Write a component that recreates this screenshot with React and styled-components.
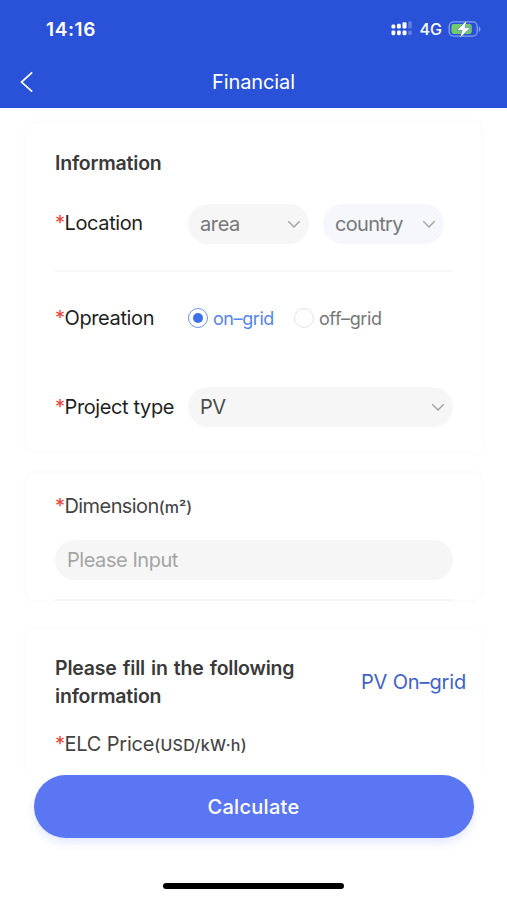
import styled, { createGlobalStyle } from "styled-components";

const GlobalStyle = createGlobalStyle`
  * {
    box-sizing: border-box;
  }
  body {
    margin: 0;
    background: #fff;
    font-family: Inter, "Liberation Sans", sans-serif;
  }
`;

const SignalIcon = () => (
  <svg width="22" height="16" viewBox="0 0 22 16" fill="#fff">
    <rect x="0.5" y="3.6" width="3.8" height="4" rx="1.4" />
    <rect x="6" y="2.8" width="3.8" height="4.8" rx="1.4" />
    <rect x="11.5" y="1.2" width="4" height="6.4" rx="1.4" />
    <rect x="0.5" y="9.4" width="3.8" height="4.8" rx="1.4" />
    <rect x="6" y="9.4" width="3.8" height="4.8" rx="1.4" />
    <rect x="11.5" y="9.4" width="4" height="4.8" rx="1.4" />
    <rect x="17.2" y="0.2" width="3.6" height="7.4" rx="1.4" opacity="0.25" />
    <rect x="17.2" y="9.4" width="3.6" height="4.8" rx="1.4" opacity="0.25" />
  </svg>
);

const BatteryIcon = () => (
  <svg width="34" height="20" viewBox="0 0 34 20">
    <rect x="1.2" y="2.8" width="28" height="14.4" rx="4.4" fill="none" stroke="#86a2ef" strokeWidth="1.3" />
    <rect x="3.4" y="5" width="20.4" height="10" rx="2.4" fill="#70ca68" />
    <path d="M30.8 7.4c2.200.8 2.200 4.600 0 5.400z" fill="#86a2ef" />
    <path d="M18.600 1.800L9 11.200h5.400L12.200 18.600l10-9.800h-5.600z" fill="#fff" stroke="#3a68c8" strokeWidth="1" strokeLinejoin="round" paintOrder="stroke" />
  </svg>
);

const BackIcon = () => (
  <svg width="14" height="22" viewBox="0 0 14 22" fill="none" stroke="#fff" strokeWidth="1.7">
    <path d="M12.200 1.300L1.500 11.100l10.700 9.600" />
  </svg>
);

const ChevronIcon = () => (
  <svg width="14" height="9" viewBox="0 0 14 9" fill="none" stroke="#a3a3a5" strokeWidth="1.400">
    <path d="M1.300 1.200l5.700 5.900 5.700-5.900" />
  </svg>
);

const App = () => {
  return (
    <Screen>
      <GlobalStyle />
      <Header>
        <StatusBar>
          <Time>14:16</Time>
          <Indicators>
            <SignalIcon />
            <Network>4G</Network>
            <BatteryIcon />
          </Indicators>
        </StatusBar>
        <NavBar>
          <BackButton aria-label="Back"><BackIcon /></BackButton>
          <NavTitle>Financial</NavTitle>
        </NavBar>
      </Header>

      <Content>
        <Card>
          <CardTitle>Information</CardTitle>
          <LocationRow>
            <Label $lift="2px"><Star>*</Star>Location</Label>
            <Selects>
              <Select>area<ChevronIcon /></Select>
              <Select $tint>country<ChevronIcon /></Select>
            </Selects>
          </LocationRow>
          <OperationRow>
            <Label><Star>*</Star>Opreation</Label>
            <Radio $checked><Dot $checked />on–grid</Radio>
            <Radio><Dot />off–grid</Radio>
          </OperationRow>
          <Row>
            <Label><Star>*</Star>Project type</Label>
            <Select $wide>PV<ChevronIcon /></Select>
          </Row>
        </Card>

        <DimensionCard>
          <FieldLabel $spacing="-0.58px"><Star>*</Star>Dimension<Unit $spacing="0">(m²)</Unit></FieldLabel>
          <Input placeholder="Please Input" />
          <Underline />
        </DimensionCard>

        <PriceCard>
          <PriceHead>
            <PriceTitle>Please fill in the following information</PriceTitle>
            <GridType>PV On–grid</GridType>
          </PriceHead>
          <FieldLabel $spacing="-0.2px"><Star>*</Star>ELC Price<Unit $spacing="0.3px">(USD/kW·h)</Unit></FieldLabel>
        </PriceCard>
      </Content>

      <Footer>
        <Calculate>Calculate</Calculate>
        <HomeBar />
      </Footer>
    </Screen>
  );
};

const Screen = styled.div`
  display: flex;
  flex-direction: column;
  width: 507px;
  height: 900px;
  overflow: hidden;
  background: #fff;
`;

const Header = styled.div`
  flex: none;
  height: 108px;
  background: #2a52d8;
  color: #fff;
`;

const StatusBar = styled.div`
  display: flex;
  align-items: center;
  justify-content: space-between;
  height: 56px;
  padding: 2px 25px 0 46px;
`;

const Time = styled.div`
  font-size: 19px;
  font-weight: 600;
  letter-spacing: 0.6px;
`;

const Indicators = styled.div`
  display: flex;
  align-items: center;
`;

const Network = styled.div`
  margin: 0 6px 0 7px;
  font-size: 16px;
  font-weight: 500;
`;

const NavBar = styled.div`
  display: grid;
  grid-template-columns: 60px 1fr 60px;
  align-items: center;
  height: 51px;
`;

const BackButton = styled.button`
  display: flex;
  padding: 1px 0 0 20px;
  border: 0;
  background: none;
`;

const NavTitle = styled.div`
  text-align: center;
  font-size: 20px;
  letter-spacing: -0.1px;
`;

const Content = styled.div`
  display: flex;
  flex-direction: column;
  flex: 1;
  min-height: 0;
  padding: 15px 26px 0 27px;
  overflow: hidden;
`;

const Card = styled.div`
  flex: none;
  height: 329px;
  padding: 28px 28px 0 28px;
  border-radius: 8px;
  background: #fff;
  box-shadow: 0 0 7px 2px rgba(0, 0, 0, 0.02);
`;

const DimensionCard = styled(Card)`
  height: 126px;
  margin-top: 22px;
  padding-top: 20px;
`;

const PriceCard = styled(Card)`
  height: 220px;
  margin-top: 28px;
  padding: 26px 15px 0 28px;
`;

const CardTitle = styled.div`
  line-height: 24px;
  font-size: 19.5px;
  font-weight: 600;
  letter-spacing: -0.2px;
  color: #3a3a3a;
`;

const Row = styled.div`
  display: flex;
  align-items: center;
  height: 40px;
`;

const LocationRow = styled(Row)`
  height: 68px;
  margin-top: 29px;
  padding-bottom: 26px;
  border-bottom: 2px solid #f7f7f7;
`;

const OperationRow = styled(Row)`
  margin: 26px 0 49px;
`;

const Label = styled.div`
  flex: none;
  width: 133px;
  padding-bottom: ${props => props.$lift || "0"};
  font-size: 20px;
  letter-spacing: -0.38px;
  color: #1f1f1f;
  white-space: nowrap;
`;

const Star = styled.span`
  display: inline-block;
  width: 9.5px;
  font-weight: 400;
  color: #e3433b;
`;

const Selects = styled.div`
  display: flex;
  gap: 14px;
`;

const Select = styled.div`
  display: flex;
  align-items: center;
  justify-content: space-between;
  width: ${props => props.$wide ? "265px" : "121px"};
  height: 40px;
  padding: 0 8px 0 12px;
  border-radius: 20px;
  background: ${props => props.$tint ? "#f5f7fd" : "#f6f6f6"};
  font-size: 20px;
  letter-spacing: ${props => props.$tint ? "-0.7px" : "-0.4px"};
  color: ${props => props.$wide ? "#4b4b4b" : "#777779"};
`;

const Radio = styled.div`
  display: flex;
  align-items: center;
  margin-right: 20px;
  font-size: 18px;
  letter-spacing: -0.42px;
  color: ${props => props.$checked ? "#5585ec" : "#777"};
`;

const Dot = styled.span`
  display: flex;
  align-items: center;
  justify-content: center;
  width: 20px;
  height: 20px;
  margin-right: 5px;
  border: ${props => props.$checked ? "1.5px solid #6a93ee" : "1.5px solid #e2e2e2"};
  border-radius: 50%;
  &::after {
    content: "";
    width: 10px;
    height: 10px;
    border-radius: 50%;
    background: ${props => props.$checked ? "#3c70e8" : "transparent"};
  }
`;

const FieldLabel = styled.div`
  line-height: 24px;
  font-size: 20px;
  letter-spacing: ${props => props.$spacing};
  color: #444;
  white-space: nowrap;
`;

const Unit = styled.span`
  font-size: 16px;
  font-weight: 500;
  letter-spacing: ${props => props.$spacing};
`;

const Input = styled.input`
  display: block;
  width: 398px;
  height: 40px;
  margin-top: 21px;
  padding: 0 12px;
  border: 0;
  border-radius: 20px;
  background: #f6f6f6;
  font-family: inherit;
  font-size: 20px;
  letter-spacing: -0.45px;
  &::placeholder {
    color: #a5a5a5;
  }
`;

const Underline = styled.div`
  height: 2px;
  margin-top: 19px;
  background: #f5f5f5;
`;

const PriceHead = styled.div`
  display: flex;
  align-items: center;
  justify-content: space-between;
  margin-bottom: 22px;
`;

const PriceTitle = styled.div`
  width: 260px;
  line-height: 28px;
  font-size: 19.5px;
  font-weight: 600;
  letter-spacing: -0.2px;
  word-spacing: 1.4px;
  color: #3a3a3a;
`;

const GridType = styled.div`
  font-size: 20px;
  letter-spacing: -0.15px;
  color: #3e62c9;
  white-space: nowrap;
`;

const Footer = styled.div`
  display: flex;
  flex-direction: column;
  align-items: center;
  flex: none;
  height: 130px;
  padding-top: 5px;
  background: #fff;
`;

const Calculate = styled.button`
  width: 440px;
  height: 63px;
  border: 0;
  border-radius: 32px;
  background: #5b76f3;
  box-shadow: 0 5px 8px rgba(91, 118, 243, 0.16);
  font-family: inherit;
  font-size: 20px;
  font-weight: 500;
  letter-spacing: 0.3px;
  color: #fff;
`;

const HomeBar = styled.div`
  width: 181px;
  height: 6px;
  margin-top: 45px;
  border-radius: 3px;
  background: #000;
`;

export default App;
